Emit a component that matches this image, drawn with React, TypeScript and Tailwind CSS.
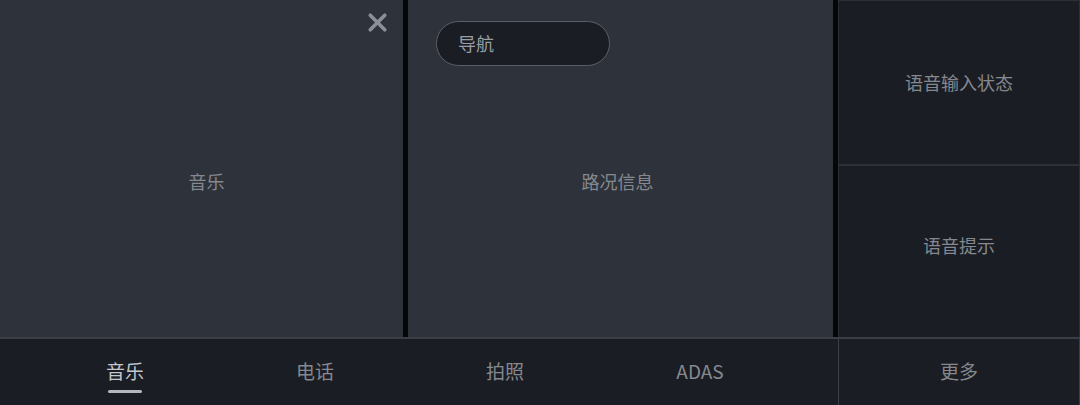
import { X } from "lucide-react"

const tabs = [
  { label: "音乐", active: true, pad: "" },
  { label: "电话", active: false, pad: "" },
  { label: "拍照", active: false, pad: "" },
  { label: "ADAS", active: false, pad: "pl-[10px]" },
]

export default function App() {
  return (
    <div
      className="w-[1080px] h-[405px] flex flex-col bg-[#000] overflow-hidden"
      style={{ fontFamily: '"Noto Sans CJK SC", "Noto Sans", sans-serif' }}
    >
      {/* top area */}
      <div className="flex h-[337px]">
        <div className="relative w-[403px] bg-[#2e323a] flex items-center justify-center pt-[26px] pl-[10px]">
          <X className="absolute right-[11px] top-[8px] text-[#8b8f96]" size={29} strokeWidth={3} />
          <span className="text-[18px] text-[#85888e]">音乐</span>
        </div>
        <div className="w-[5px] bg-[#050607]" />
        <div className="relative w-[425px] bg-[#2e323a] flex items-center justify-center pt-[26px] pr-[6px]">
          <div className="absolute left-[28px] top-[21px] w-[174px] h-[45px] rounded-full bg-[#1a1d23] border border-[#5a5e66] flex items-center pl-[21px]">
            <span className="text-[18px] text-[#9a9ea4]">导航</span>
          </div>
          <span className="text-[18px] text-[#85888e]">路况信息</span>
        </div>
        <div className="w-[5px] bg-[#050607]" />
        <div className="flex-1 flex flex-col bg-[#1a1d23] border-t border-l border-r border-[#2c3036]">
          <div className="h-[165px] flex items-center justify-center border-b-2 border-[#2c3036]">
            <span className="text-[18px] text-[#85888e]">语音输入状态</span>
          </div>
          <div className="flex-1 flex items-center justify-center pb-[12px]">
            <span className="text-[18px] text-[#85888e]">语音提示</span>
          </div>
        </div>
      </div>

      {/* bottom bar */}
      <div className="flex-1 flex bg-[#1a1d23] border-t-2 border-[#3a3f47]">
        <div className="w-[838px] flex pl-[30px]">
          {tabs.map((t) => (
            <div key={t.label} className={`relative w-[190px] flex items-center justify-center pb-[2px] ${t.pad}`}>
              <span className={t.active ? "text-[19px] text-[#c4c7cc]" : "text-[19px] text-[#85888e]"}>
                {t.label}
              </span>
              {t.active && (
                <div className="absolute bottom-[12px] left-1/2 -translate-x-1/2 w-[34px] h-[3px] rounded-full bg-[#b4b8be]" />
              )}
            </div>
          ))}
        </div>
        <div className="flex-1 flex items-center justify-center pb-[2px] border-l border-r border-[#3a3f47]">
          <span className="text-[19px] text-[#85888e]">更多</span>
        </div>
      </div>
    </div>
  )
}
